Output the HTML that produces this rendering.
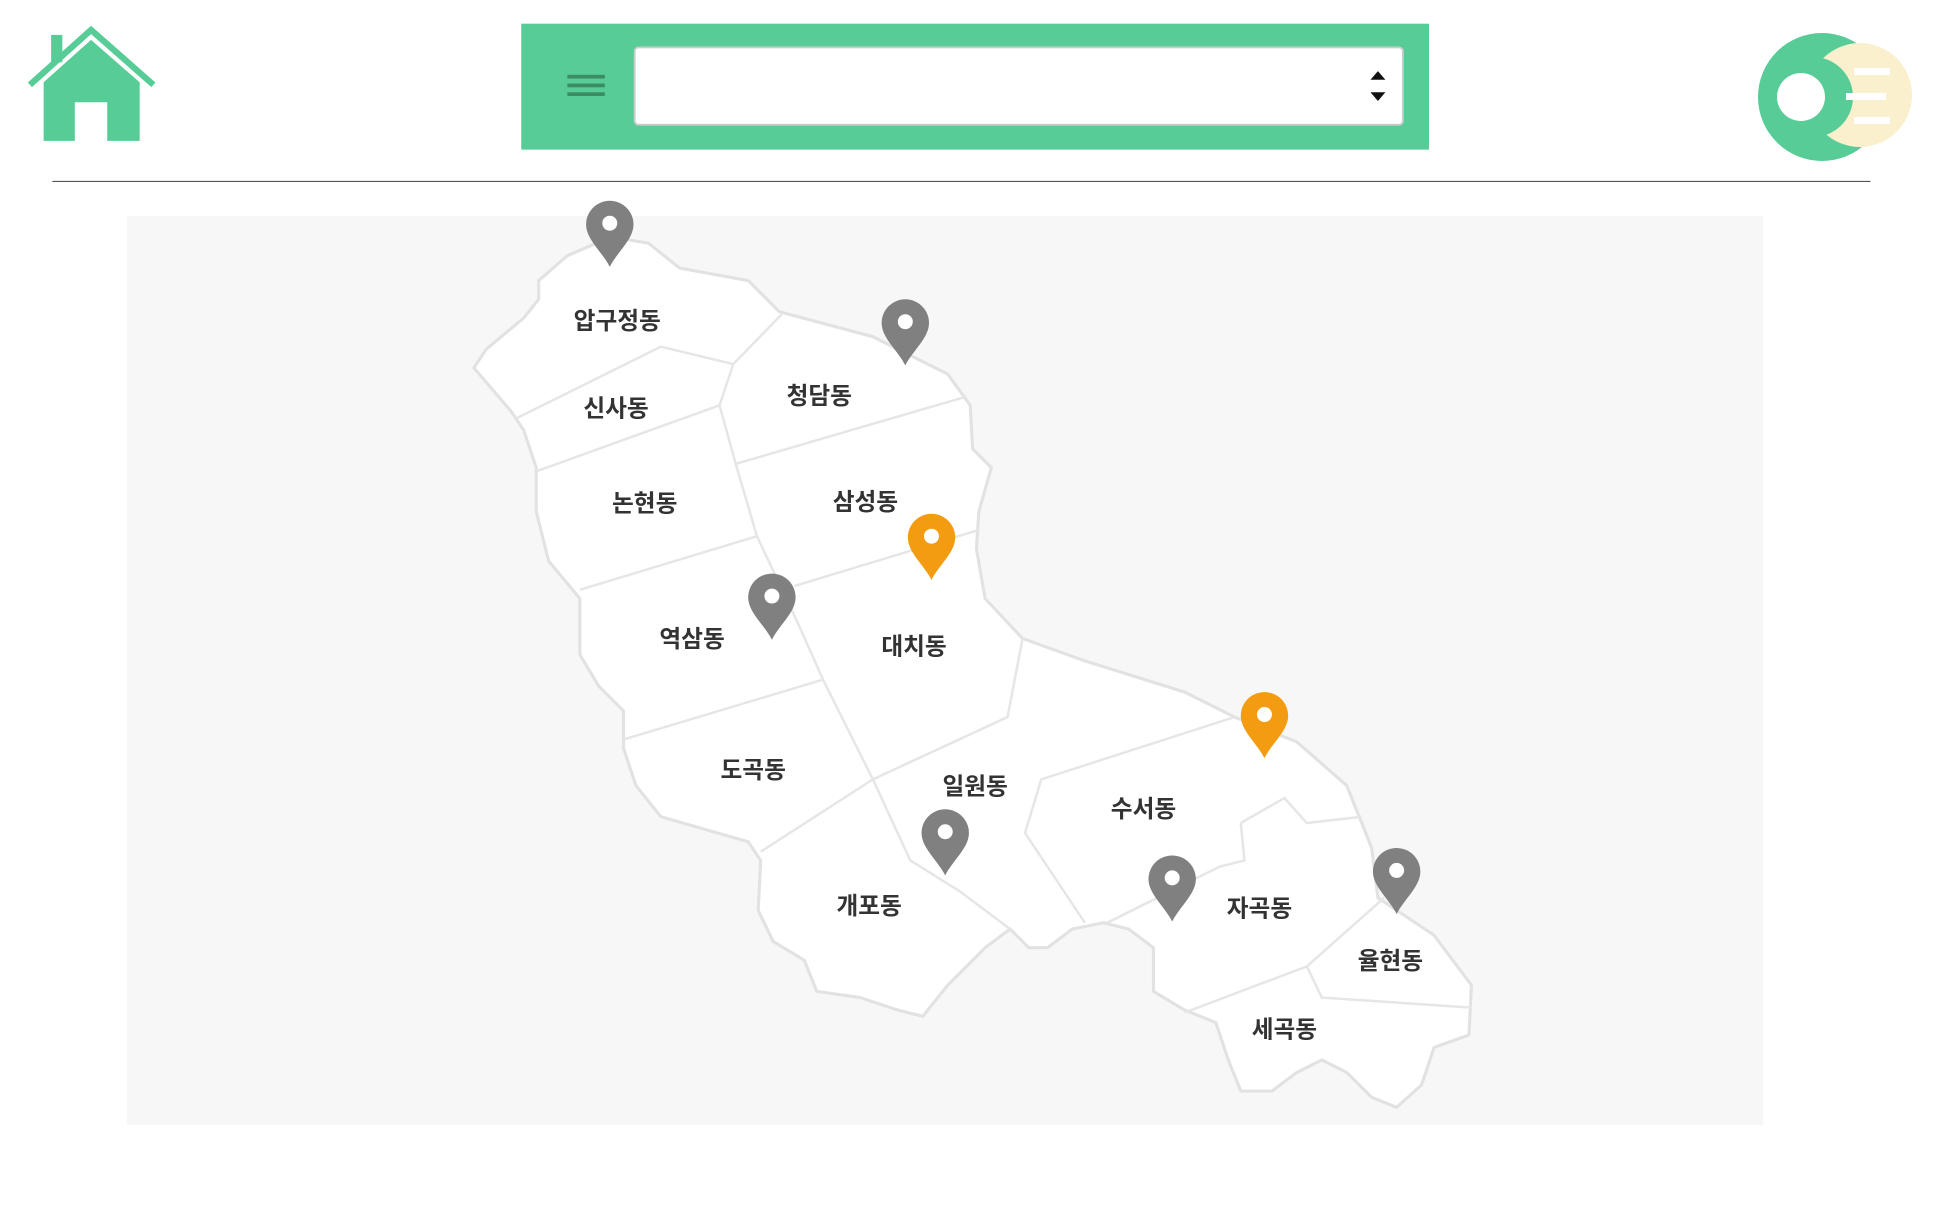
<!DOCTYPE html>
<html><head><meta charset="utf-8"><style>
html,body{margin:0;padding:0;background:#fff;width:1956px;height:1200px;overflow:hidden}
#w{position:absolute;left:0;top:0;width:1570px;height:975px;transform-origin:0 0;transform:scale(1.247,1.247)}
.lbl{font-family:"Liberation Sans","Noto Sans CJK KR",sans-serif;font-size:19px;font-weight:bold;fill:#333;text-anchor:middle}
</style></head><body>
<div id="w">
<svg width="1570" height="975" viewBox="0 0 1570 975" xmlns="http://www.w3.org/2000/svg">
<path d="M35 66 L73 32 L112 66 L112 113 L86 113 L86 82 L60 82 L60 113 L35 113 Z" fill="#57cc96"/>
<polyline points="24,68 73,24 123,68" fill="none" stroke="#57cc96" stroke-width="5"/>
<rect x="41" y="28" width="9" height="22" fill="#57cc96"/>
<rect x="418" y="19" width="728" height="101" fill="#57cc96"/>
<rect x="509" y="38" width="616" height="62" rx="3" fill="#fff" stroke="#ccc" stroke-width="1.5"/>
<rect x="455" y="60" width="30" height="3" fill="#3b8c63"/>
<rect x="455" y="67" width="30" height="3" fill="#3b8c63"/>
<rect x="455" y="74" width="30" height="3" fill="#3b8c63"/>
<path d="M1099 64 L1105 57 L1111 64Z M1099 74 L1105 81 L1111 74Z" fill="#111"/>
<line x1="42" y1="145.5" x2="1500" y2="145.5" stroke="#555" stroke-width="1"/>
<rect x="102" y="173" width="1312" height="729" fill="#f7f7f7"/>
<path d="M432 225 L455 205 L490 190 L520 195 L545 215 L600 225 L625 250 L700 270 L760 300 L778 325 L780 360 L795 375 L785 410 L783 440 L790 480 L820 512 L870 530 L950 555 L990 575 L1040 595 L1080 630 L1100 680 L1105 720 L1150 750 L1180 790 L1178 830 L1150 840 L1140 870 L1120 888 L1100 880 L1080 860 L1060 850 L1040 860 L1020 875 L995 875 L985 850 L975 820 L950 810 L925 795 L925 760 L905 745 L885 740 L860 745 L840 760 L825 760 L810 745 L790 760 L760 790 L740 815 L720 810 L690 800 L655 795 L645 770 L620 755 L608 730 L610 690 L600 675 L565 665 L530 655 L510 630 L500 600 L500 570 L480 550 L465 525 L465 480 L440 450 L430 410 L430 375 L420 345 L410 330 L380 295 L390 280 L420 255 L432 240 Z" fill="#fff" stroke="#e2e2e2" stroke-width="2.5" stroke-linejoin="round"/>
<g fill="none" stroke="#e6e6e6" stroke-width="2">
<polyline points="415,335 530,278 588,292 627,252"/>
<polyline points="588,292 577,325 590,372 607,430 640,500 660,545 700,625 730,690 770,715 810,745"/>
<polyline points="577,325 430,378"/>
<polyline points="590,372 775,318"/>
<polyline points="607,430 465,473"/>
<polyline points="637,470 785,425"/>
<polyline points="500,593 660,545"/>
<polyline points="610,683 700,625 808,575 820,512"/>
<polyline points="835,625 990,575"/>
<polyline points="835,625 822,668 870,740"/>
<polyline points="995,660 1030,640 1048,660 1092,655"/>
<polyline points="995,660 998,690 978,695 888,740"/>
<polyline points="1048,775 1110,720"/>
<polyline points="950,812 1048,775 1060,800 1180,808"/>
</g>
<text class="lbl" x="495" y="264">압구정동</text>
<text class="lbl" x="494" y="334">신사동</text>
<text class="lbl" x="657" y="324">청담동</text>
<text class="lbl" x="517" y="410">논현동</text>
<text class="lbl" x="694" y="409">삼성동</text>
<text class="lbl" x="555" y="519">역삼동</text>
<text class="lbl" x="733" y="525">대치동</text>
<text class="lbl" x="604" y="624">도곡동</text>
<text class="lbl" x="782" y="637">일원동</text>
<text class="lbl" x="917" y="655">수서동</text>
<text class="lbl" x="697" y="733">개포동</text>
<text class="lbl" x="1010" y="735">자곡동</text>
<text class="lbl" x="1115" y="777">율현동</text>
<text class="lbl" x="1030" y="832">세곡동</text>
<defs><g id="pin"><path d="M0 0 C-6 -12 -19 -22 -19 -34 A19 19 0 1 1 19 -34 C19 -22 6 -12 0 0Z"/><circle cx="0" cy="-35" r="6" fill="#fff"/></g></defs>
<g fill="#808080">
<use href="#pin" x="489" y="214"/>
<use href="#pin" x="726" y="293"/>
<use href="#pin" x="619" y="513"/>
<use href="#pin" x="758" y="702"/>
<use href="#pin" x="940" y="739"/>
<use href="#pin" x="1120" y="733"/>
</g>
<g fill="#f39c12">
<use href="#pin" x="747" y="465"/>
<use href="#pin" x="1014" y="608"/>
</g>
</svg>
</div>
<svg style="position:absolute;left:0;top:0" width="1956" height="200" xmlns="http://www.w3.org/2000/svg">
<circle cx="1822" cy="97" r="64" fill="#57cc96"/>
<circle cx="1860" cy="95" r="52" fill="#faf0cd"/>
<circle cx="1813" cy="97" r="40" fill="#57cc96"/>
<circle cx="1801" cy="97" r="24" fill="#fff"/>
<rect x="1854" y="68" width="36" height="7" fill="#fff"/>
<rect x="1846" y="93" width="40" height="7" fill="#fff"/>
<rect x="1854" y="117" width="36" height="7" fill="#fff"/>
</svg>
</body></html>
